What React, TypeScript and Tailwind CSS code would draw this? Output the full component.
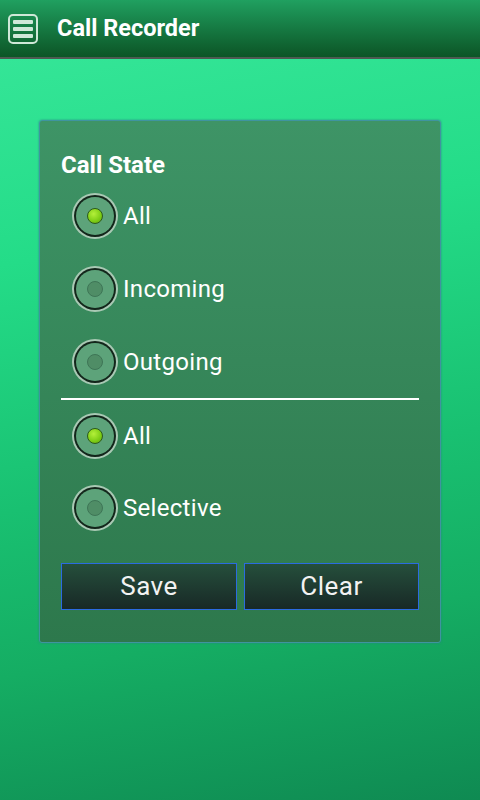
import React from "react";

function Radio({ checked, label }: { checked: boolean; label: string }) {
  return (
    <div className="flex items-center pl-[11px]">
      <div className="w-[46px] h-[46px] rounded-full bg-[#a9c9b4] p-[2px] flex-none">
        <div className="w-full h-full rounded-full bg-[#13261b] p-[2px]">
          <div className="w-full h-full rounded-full bg-[#5da37a] flex items-center justify-center">
            {checked ? (
              <div className="w-[16px] h-[16px] rounded-full bg-[radial-gradient(circle_at_40%_35%,#b4f03a,#7ccc14_60%,#5fa010)] border border-[#2d5a1a]" />
            ) : (
              <div className="w-[16px] h-[16px] rounded-full bg-[#4f8d66] border border-[#3e7556]" />
            )}
          </div>
        </div>
      </div>
      <span className="ml-[5px] text-[24px] tracking-[0.3px] text-white leading-none">
        {label}
      </span>
    </div>
  );
}

export default function App() {
  return (
    <div className="w-[480px] h-[800px] flex flex-col overflow-hidden" style={{ fontFamily: "Roboto, 'Noto Sans', sans-serif" }}>
      <div className="h-[57px] flex-none flex items-center bg-gradient-to-b from-[#20a060] to-[#0c5526]">
        <div className="ml-[8px] w-[30px] h-[30px] rounded-[5px] border-2 border-[#cfe8d8] flex flex-col justify-center items-center gap-[3px]">
          <div className="w-[20px] h-[4px] rounded-[1px] bg-[#cfe8d8]" />
          <div className="w-[20px] h-[4px] rounded-[1px] bg-[#cfe8d8]" />
          <div className="w-[20px] h-[4px] rounded-[1px] bg-[#cfe8d8]" />
        </div>
        <span className="ml-[19px] text-[23.5px] font-bold text-white">Call Recorder</span>
      </div>
      <div className="h-[2px] flex-none bg-[#4d5a52]" />
      <div className="flex-1 bg-[linear-gradient(170deg,#34e597_0%,#24dc88_25%,#19c071_55%,#15ad63_75%,#0f8a52_100%)] pt-[61px] pl-[39px]">
        <div className="w-[402px] h-[523px] rounded-[3px] border border-[#3f94a0] bg-gradient-to-b from-[#3e9466] to-[#2d784c] shadow-[0_0_2px_#2a7f8a] px-[21px] pt-[29px]">
          <div className="h-[29px] flex items-center text-[24px] font-bold text-white">Call State</div>
          <div className="h-[73px] flex items-center"><Radio checked label="All" /></div>
          <div className="h-[73px] flex items-center"><Radio checked={false} label="Incoming" /></div>
          <div className="h-[73px] flex items-center"><Radio checked={false} label="Outgoing" /></div>
          <div className="h-[2px] bg-white" />
          <div className="h-[72px] flex items-center"><Radio checked label="All" /></div>
          <div className="h-[72px] flex items-center"><Radio checked={false} label="Selective" /></div>
          <div className="mt-[19px] flex gap-[7px]">
            <button className="w-[176px] h-[47px] border border-[#2b6be0] bg-gradient-to-b from-[#254f3c] to-[#182926] text-[26px] tracking-[0.5px] text-[#f2f2f2]">Save</button>
            <button className="w-[175px] h-[47px] border border-[#2b6be0] bg-gradient-to-b from-[#254f3c] to-[#182926] text-[26px] tracking-[0.5px] text-[#f2f2f2]">Clear</button>
          </div>
        </div>
      </div>
    </div>
  );
}
